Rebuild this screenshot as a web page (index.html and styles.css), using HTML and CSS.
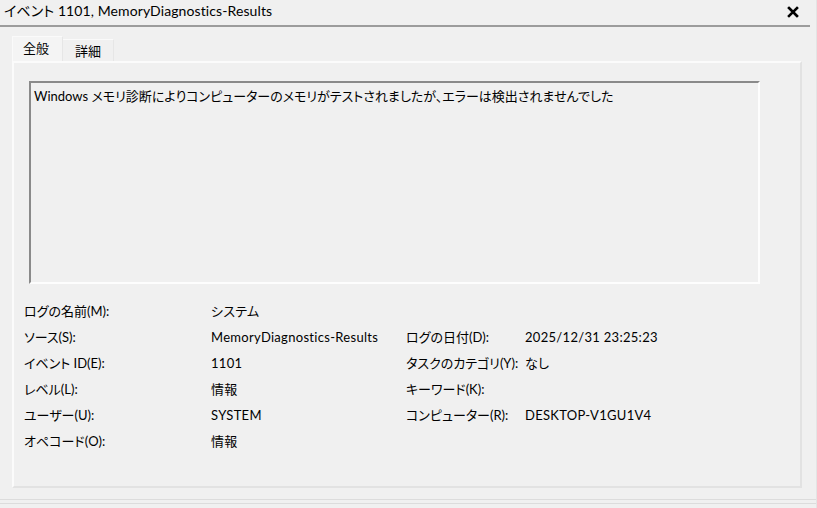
FILE: index.html
```html
<!DOCTYPE html>
<html lang="ja">
<head>
<meta charset="utf-8">
<link rel="stylesheet" href="styles.css">
</head>
<body>
<div class="window">
  <div class="titlebar">
    <span class="title">イベント 1101, MemoryDiagnostics-Results</span>
    <span class="close">
      <svg width="12" height="12" viewBox="0 0 12 12"><path d="M2 2 L10 10 M10 2 L2 10" stroke="#000" stroke-width="2.6" stroke-linecap="square"/></svg>
    </span>
  </div>
  <div class="divider"></div>
  <div class="tabs">
    <div class="tab active">全般</div>
    <div class="tab">詳細</div>
  </div>
  <div class="panel">
    <div class="message">Windows メモリ診断によりコンピューターのメモリがテストされましたが、エラーは検出されませんでした</div>
    <div class="fields">
      <div class="lbl">ログの名前(M):</div><div class="val">システム</div><div></div><div></div>
      <div class="lbl">ソース(S):</div><div class="val">MemoryDiagnostics-Results</div><div class="lbl">ログの日付(D):</div><div class="val">2025/12/31 23:25:23</div>
      <div class="lbl">イベント ID(E):</div><div class="val">1101</div><div class="lbl">タスクのカテゴリ(Y):</div><div class="val">なし</div>
      <div class="lbl">レベル(L):</div><div class="val">情報</div><div class="lbl">キーワード(K):</div><div class="val"></div>
      <div class="lbl">ユーザー(U):</div><div class="val">SYSTEM</div><div class="lbl">コンピューター(R):</div><div class="val">DESKTOP-V1GU1V4</div>
      <div class="lbl">オペコード(O):</div><div class="val">情報</div><div></div><div></div>
    </div>
  </div>
  <div class="footer"></div>
</div>
</body>
</html>
```
FILE: styles.css
```css
html, body {
  margin: 0;
  padding: 0;
  background: #f0f0f0;
}
body {
  width: 817px;
  height: 508px;
  overflow: hidden;
  font-family: "Lato", "Noto Sans CJK JP", sans-serif;
  font-size: 13px;
  color: #000;
  font-feature-settings: "palt";
}
.window {
  width: 817px;
  height: 508px;
  display: flex;
  flex-direction: column;
  border-right: 1px solid #e4e4e4;
  box-sizing: border-box;
}
.titlebar {
  height: 25px;
  display: flex;
  align-items: center;
  justify-content: space-between;
  padding: 0 17px 3px 4px;
  box-sizing: border-box;
}
.title {
  font-size: 14px;
  line-height: 18px;
  letter-spacing: 0.1px;
}
.close {
  display: flex;
  align-items: center;
  margin-top: 1px;
}
.divider {
  height: 2px;
  width: 810px;
  background: #9c9c9c;
}
.tabs {
  display: flex;
  align-items: flex-end;
  margin: 9px 0 0 12px;
  height: 25px;
}
.tab {
  width: 51px;
  height: 22px;
  display: flex;
  align-items: center;
  justify-content: center;
  box-sizing: border-box;
  border-top: 1px solid #fafafa;
  border-right: 1px solid #e6e6e6;
  font-size: 13px;
}
.tab.active {
  height: 25px;
  background: #f4f4f4;
  border-left: 1px solid #fafafa;
  padding: 0 3px 3px 0;
}
.panel {
  margin-left: 12px;
  width: 790px;
  height: 427px;
  box-sizing: border-box;
  border: 2px solid #fbfbfb;
  border-right-color: #e2e2e2;
  border-bottom-color: #e2e2e2;
  padding: 18px 0 0 15px;
}
.message {
  width: 731px;
  height: 203px;
  box-sizing: border-box;
  border-top: 2px solid #8a8a8a;
  border-left: 2px solid #8a8a8a;
  border-right: 2px solid #fdfdfd;
  border-bottom: 2px solid #fdfdfd;
  padding: 4px 0 0 3px;
  font-size: 13px;
  line-height: 18px;
}
.fields {
  display: grid;
  grid-template-columns: 187px 195px 119px auto;
  grid-auto-rows: 26px;
  margin: 14px 0 0 -5px;
  align-items: center;
}
.lbl, .val {
  font-size: 13px;
  line-height: 18px;
  white-space: nowrap;
}
.val {
  letter-spacing: 0.3px;
}
.footer {
  margin-top: 11px;
  height: 3px;
  border-top: 1px solid #dcdcdc;
  border-bottom: 1px solid #dcdcdc;
}
```
